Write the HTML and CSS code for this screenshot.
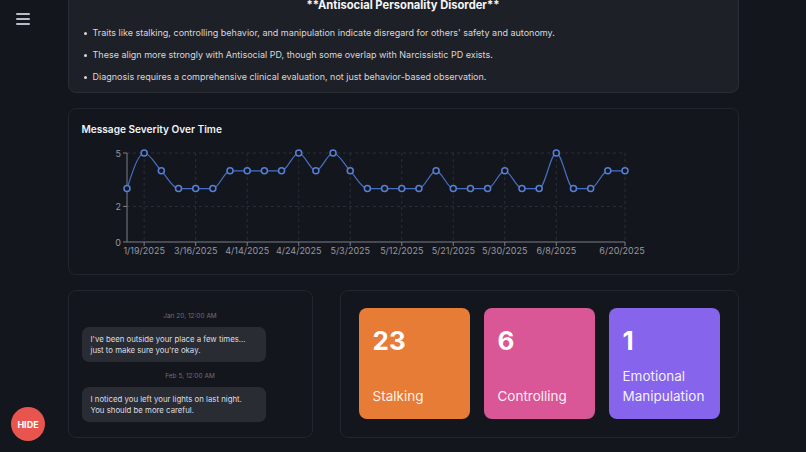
FILE: index.html
```html
<!DOCTYPE html>
<html lang="en">
<head>
<meta charset="utf-8">
<title>Analysis</title>
<link rel="stylesheet" href="styles.css">
</head>
<body>
<div class="menu-btn"><span></span><span></span><span></span></div>
<main class="page">
  <section class="card summary">
    <h2>**Antisocial Personality Disorder**</h2>
    <ul>
      <li>Traits like stalking, controlling behavior, and manipulation indicate disregard for others' safety and autonomy.</li>
      <li>These align more strongly with Antisocial PD, though some overlap with Narcissistic PD exists.</li>
      <li>Diagnosis requires a comprehensive clinical evaluation, not just behavior-based observation.</li>
    </ul>
  </section>

  <section class="card chart-card">
    <h3>Message Severity Over Time</h3>
    <svg class="chart" viewBox="81 145 643 116" width="643" height="116">
      <g class="grid">
        <line x1="126" y1="153" x2="624" y2="153"/>
        <line x1="126" y1="206.4" x2="624" y2="206.4"/>
        <line x1="143.17" y1="153" x2="143.17" y2="242"/>
        <line x1="194.69" y1="153" x2="194.69" y2="242"/>
        <line x1="246.2" y1="153" x2="246.2" y2="242"/>
        <line x1="297.72" y1="153" x2="297.72" y2="242"/>
        <line x1="349.24" y1="153" x2="349.24" y2="242"/>
        <line x1="400.75" y1="153" x2="400.75" y2="242"/>
        <line x1="452.27" y1="153" x2="452.27" y2="242"/>
        <line x1="503.78" y1="153" x2="503.78" y2="242"/>
        <line x1="555.3" y1="153" x2="555.3" y2="242"/>
        <line x1="624" y1="153" x2="624" y2="242"/>
      </g>
      <g class="axis">
        <line x1="126" y1="153" x2="126" y2="242"/>
        <line x1="126" y1="242" x2="624" y2="242"/>
        <line x1="122" y1="153" x2="126" y2="153"/>
        <line x1="122" y1="206.4" x2="126" y2="206.4"/>
        <line x1="122" y1="242" x2="126" y2="242"/>
        <line x1="143.17" y1="242" x2="143.17" y2="246"/>
        <line x1="194.69" y1="242" x2="194.69" y2="246"/>
        <line x1="246.2" y1="242" x2="246.2" y2="246"/>
        <line x1="297.72" y1="242" x2="297.72" y2="246"/>
        <line x1="349.24" y1="242" x2="349.24" y2="246"/>
        <line x1="400.75" y1="242" x2="400.75" y2="246"/>
        <line x1="452.27" y1="242" x2="452.27" y2="246"/>
        <line x1="503.78" y1="242" x2="503.78" y2="246"/>
        <line x1="555.3" y1="242" x2="555.3" y2="246"/>
        <line x1="624" y1="242" x2="624" y2="246"/>
      </g>
      <g class="ylabels">
        <text x="120" y="156.5">5</text>
        <text x="120" y="209.5">2</text>
        <text x="120" y="245.5">0</text>
      </g>
      <g class="xlabels">
        <text x="143.17" y="254">1/19/2025</text>
        <text x="194.69" y="254">3/16/2025</text>
        <text x="246.2" y="254">4/14/2025</text>
        <text x="297.72" y="254">4/24/2025</text>
        <text x="349.24" y="254">5/3/2025</text>
        <text x="400.75" y="254">5/12/2025</text>
        <text x="452.27" y="254">5/21/2025</text>
        <text x="503.78" y="254">5/30/2025</text>
        <text x="555.3" y="254">6/8/2025</text>
        <text x="621" y="254">6/20/2025</text>
      </g>
      <path class="line" d="M126,188.6 C131.72,170.8 137.45,153 143.17,153 C148.89,153 154.62,164.87 160.34,170.8 C166.07,176.73 171.79,188.6 177.52,188.6 L194.69,188.6 L211.86,188.6 C217.58,188.6 223.31,170.8 229.03,170.8 L246.2,170.8 L263.38,170.8 L280.55,170.8 C286.27,170.8 292,153 297.72,153 C303.44,153 309.17,170.8 314.89,170.8 C320.61,170.8 326.34,153 332.06,153 C337.78,153 343.51,164.87 349.24,170.8 C354.96,176.73 360.69,188.6 366.41,188.6 L383.58,188.6 L400.75,188.6 L417.92,188.6 C423.64,188.6 429.37,170.8 435.1,170.8 C440.82,170.8 446.55,188.6 452.27,188.6 L469.44,188.6 L486.61,188.6 C492.33,188.6 498.06,170.8 503.78,170.8 C509.5,170.8 515.23,188.6 520.96,188.6 L538.13,188.6 C543.85,188.6 549.58,153 555.3,153 C561.02,153 566.75,188.6 572.47,188.6 L589.64,188.6 C595.36,188.6 601.09,170.8 606.82,170.8 L623.99,170.8"/>
      <g class="dots">
        <circle cx="126" cy="188.6" r="3"/>
        <circle cx="143.17" cy="153" r="3"/>
        <circle cx="160.34" cy="170.8" r="3"/>
        <circle cx="177.52" cy="188.6" r="3"/>
        <circle cx="194.69" cy="188.6" r="3"/>
        <circle cx="211.86" cy="188.6" r="3"/>
        <circle cx="229.03" cy="170.8" r="3"/>
        <circle cx="246.2" cy="170.8" r="3"/>
        <circle cx="263.38" cy="170.8" r="3"/>
        <circle cx="280.55" cy="170.8" r="3"/>
        <circle cx="297.72" cy="153" r="3"/>
        <circle cx="314.89" cy="170.8" r="3"/>
        <circle cx="332.06" cy="153" r="3"/>
        <circle cx="349.24" cy="170.8" r="3"/>
        <circle cx="366.41" cy="188.6" r="3"/>
        <circle cx="383.58" cy="188.6" r="3"/>
        <circle cx="400.75" cy="188.6" r="3"/>
        <circle cx="417.92" cy="188.6" r="3"/>
        <circle cx="435.1" cy="170.8" r="3"/>
        <circle cx="452.27" cy="188.6" r="3"/>
        <circle cx="469.44" cy="188.6" r="3"/>
        <circle cx="486.61" cy="188.6" r="3"/>
        <circle cx="503.78" cy="170.8" r="3"/>
        <circle cx="520.96" cy="188.6" r="3"/>
        <circle cx="538.13" cy="188.6" r="3"/>
        <circle cx="555.3" cy="153" r="3"/>
        <circle cx="572.47" cy="188.6" r="3"/>
        <circle cx="589.64" cy="188.6" r="3"/>
        <circle cx="606.82" cy="170.8" r="3"/>
        <circle cx="623.99" cy="170.8" r="3"/>
      </g>
    </svg>
  </section>

  <div class="bottom-row">
    <section class="card messages">
      <div class="stamp">Jan 20, 12:00 AM</div>
      <div class="bubble">I've been outside your place a few times... just to make sure you're okay.</div>
      <div class="stamp second">Feb 5, 12:00 AM</div>
      <div class="bubble">I noticed you left your lights on last night. You should be more careful.</div>
    </section>
    <section class="card stats">
      <div class="tile orange"><div class="num">23</div><div class="label">Stalking</div></div>
      <div class="tile pink"><div class="num">6</div><div class="label">Controlling</div></div>
      <div class="tile purple"><div class="num">1</div><div class="label">Emotional Manipulation</div></div>
    </section>
  </div>
</main>
<button class="hide-btn">HIDE</button>
</body>
</html>
```

FILE: styles.css
```css
html, body {
  margin: 0;
  padding: 0;
}
body {
  background: #14161d;
  font-family: Inter, "Noto Sans", sans-serif;
  color: #e5e7eb;
  height: 452px;
  overflow: hidden;
}

.menu-btn {
  position: fixed;
  left: 16px;
  top: 13px;
  width: 14px;
  display: flex;
  flex-direction: column;
  gap: 3.5px;
}
.menu-btn span {
  display: block;
  height: 1.5px;
  background: #b9bdc6;
  border-radius: 1px;
}

.page {
  width: 671px;
  margin: -17px auto 0;
  display: flex;
  flex-direction: column;
  gap: 15px;
}

.card {
  border: 1px solid #22252d;
  border-radius: 8px;
  background: #14161d;
  box-sizing: border-box;
}

.summary {
  background: #1e2027;
  border-color: #2a2d35;
  padding: 13px 14px 8px;
}
.summary h2 {
  margin: 0;
  text-align: center;
  font-size: 11.2px;
  font-weight: 700;
  line-height: 16px;
  color: #f5f6f8;
}
.summary ul {
  margin: 13px 0 0;
  padding: 0;
  list-style: none;
  display: flex;
  flex-direction: column;
  gap: 8px;
}
.summary li {
  display: flex;
  align-items: center;
  gap: 6px;
  padding-left: 1px;
  font-size: 9px;
  line-height: 14px;
  color: #d6d8dd;
}
.summary li::before {
  content: "";
  flex: none;
  width: 3px;
  height: 3px;
  border-radius: 50%;
  background: #d6d8dd;
}

.chart-card {
  padding: 13px 13px 13px;
}
.chart-card h3 {
  margin: 0;
  font-size: 10.1px;
  font-weight: 600;
  line-height: 14px;
  color: #f1f2f4;
}
.chart {
  display: block;
  margin-top: 9px;
}
.chart .grid line {
  stroke: #2a2e38;
  stroke-width: 1;
  stroke-dasharray: 3 3;
}
.chart .axis line {
  stroke: #7a7f89;
  stroke-width: 1;
}
.chart text {
  font-family: Inter, "Noto Sans", sans-serif;
  font-size: 9px;
  fill: #9499a3;
}
.chart .ylabels text {
  text-anchor: end;
}
.chart .xlabels text {
  text-anchor: middle;
}
.chart .line {
  fill: none;
  stroke: #4670c4;
  stroke-width: 1.2;
}
.chart .dots circle {
  fill: #14161d;
  stroke: #5580d6;
  stroke-width: 1.5;
}

.bottom-row {
  display: grid;
  grid-template-columns: 245px 1fr;
  gap: 27px;
}

.messages {
  padding: 21px 13px 0;
  display: flex;
  flex-direction: column;
}
.stamp {
  text-align: center;
  font-size: 6.5px;
  line-height: 9px;
  color: #6b7079;
}
.stamp.second {
  margin-top: 10px;
}
.bubble {
  margin-top: 6px;
  width: 85%;
  box-sizing: border-box;
  padding: 7px 9px;
  background: #2a2c33;
  border-radius: 7px;
  font-size: 7.8px;
  line-height: 10.5px;
  color: #dcdee2;
}

.stats {
  padding: 17px 18px 18px;
  display: grid;
  grid-template-columns: repeat(3, 1fr);
  gap: 14px;
}
.tile {
  height: 111px;
  box-sizing: border-box;
  border-radius: 8px;
  padding: 18px 14px 13px;
  display: flex;
  flex-direction: column;
  justify-content: space-between;
  color: #ffffff;
}
.tile .num {
  font-size: 26px;
  font-weight: 700;
  line-height: 30px;
}
.tile .label {
  font-size: 13.5px;
  line-height: 20px;
  color: rgba(255, 255, 255, 0.92);
}
.orange { background: #e77c36; }
.pink { background: #da5797; }
.purple { background: #8664ec; }

.hide-btn {
  position: fixed;
  left: 11px;
  bottom: 11px;
  width: 34px;
  height: 34px;
  border: none;
  border-radius: 50%;
  background: #e8554f;
  color: #ffffff;
  font-family: Inter, "Noto Sans", sans-serif;
  font-size: 9px;
  font-weight: 700;
  padding: 0;
}
```
